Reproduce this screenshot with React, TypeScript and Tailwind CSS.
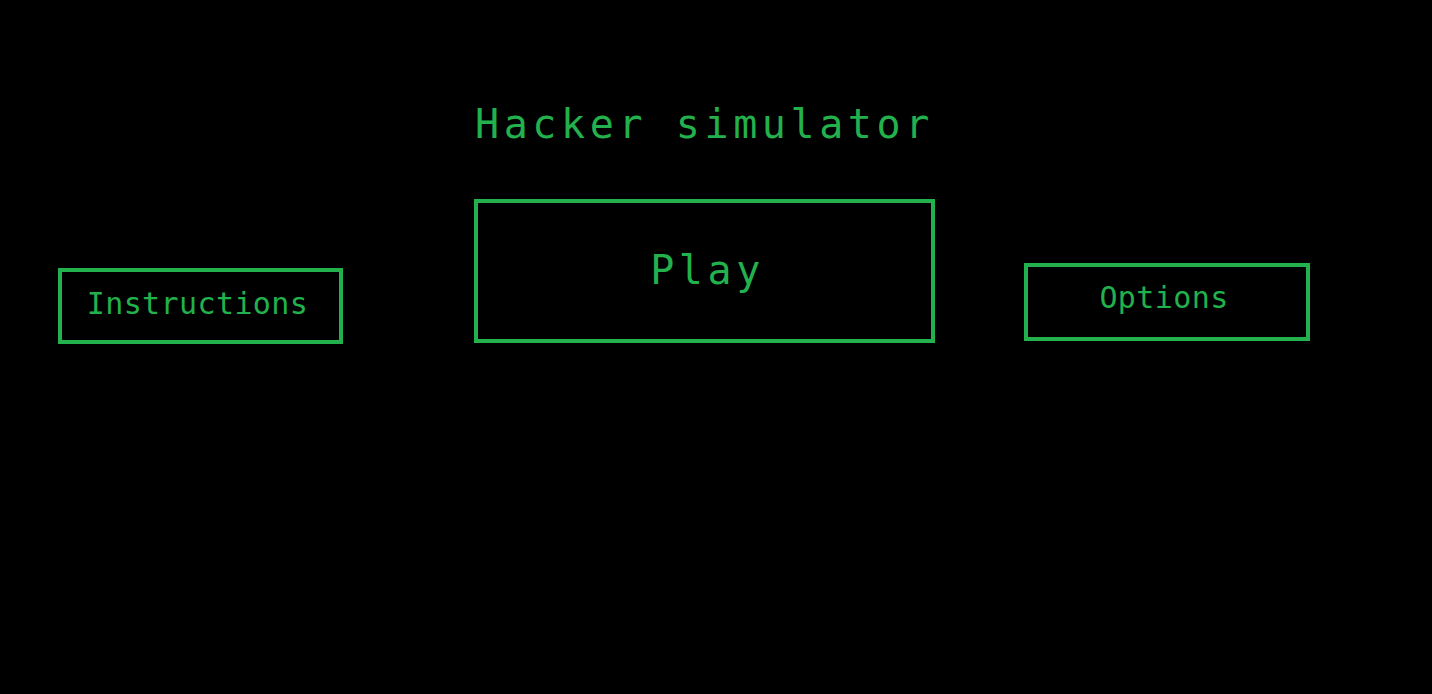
export default function App() {
  const mono = "font-['DejaVu_Sans_Mono','Liberation_Mono',monospace]"
  return (
    <div className={`w-full h-[694px] bg-black text-[#22b14c] ${mono}`}>
      <div className="ml-[475px] pt-[104px] text-[40px] leading-none tracking-[4.6px] whitespace-nowrap">
        Hacker simulator
      </div>

      <div className="flex items-start mt-[55px]">
        <button className="ml-[58px] mt-[69px] w-[285px] h-[76px] border-4 border-[#22b14c] flex items-center justify-center text-[30px] leading-none tracking-[0.4px] pb-[4px] pr-[6px]">
          Instructions
        </button>
        <button className="ml-[131px] w-[461px] h-[144px] border-4 border-[#22b14c] flex items-center justify-center text-[40px] leading-none tracking-[4.6px] pb-[2px] pl-[6px]">
          Play
        </button>
        <button className="ml-[89px] mt-[64px] w-[286px] h-[78px] border-4 border-[#22b14c] flex items-center justify-center text-[30px] leading-none tracking-[0.4px] pb-[8px] pr-[6px]">
          Options
        </button>
      </div>
    </div>
  )
}
